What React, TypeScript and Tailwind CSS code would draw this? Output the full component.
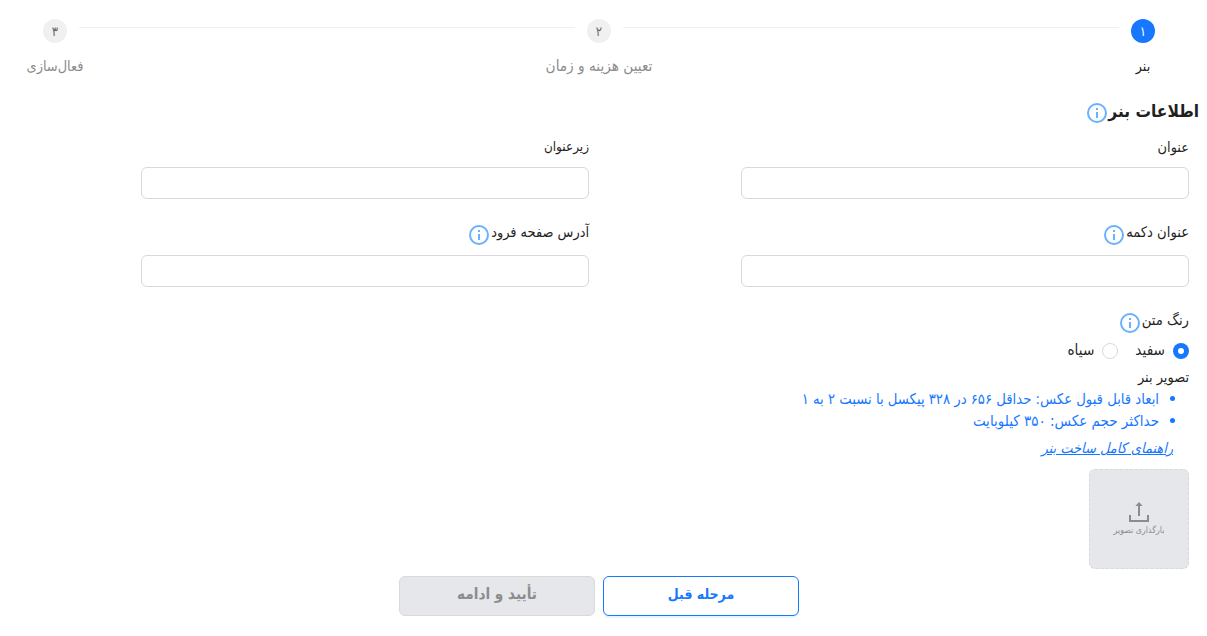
import { useState } from "react";
import clsx from "clsx";

const steps = [
  { number: "۱", title: "بنر", size: "text-[14.2px]" },
  { number: "۲", title: "تعیین هزینه و زمان", size: "text-[15.2px]" },
  { number: "۳", title: "فعال‌سازی", size: "text-[14.4px]" },
];

function InfoIcon() {
  return (
    <svg viewBox="0 0 20 20" className="size-5 shrink-0" fill="none" aria-hidden>
      <circle cx="10" cy="10" r="9" stroke="#69b1ff" strokeWidth="2" />
      <path d="M9 5h2v2H9zM9 9h2v6H9z" fill="#69b1ff" />
    </svg>
  );
}

function Steps({ current }: { current: number }) {
  return (
    <div className="flex h-[60px] items-start justify-between pr-[1px]">
      {steps.map((step, index) => (
        <div key={step.number} className={clsx("flex", index < 2 && "w-[544px]")}>
          <div className="flex w-[110px] flex-col items-center">
            <span
              className={clsx(
                "flex size-6 items-center justify-center rounded-full text-[13px] leading-none",
                index === current ? "bg-[#1677ff] text-white" : "bg-[#f0f0f0] text-[#666]",
              )}
            >
              {step.number}
            </span>
            <span
              className={clsx(
                "mt-[12px] whitespace-nowrap leading-[22px]",
                step.size,
                index === current ? "text-[#1f1f1f]" : "text-[#8c8c8c]",
              )}
            >
              {step.title}
            </span>
          </div>
          {index < 2 && <span className="-mx-[31px] mt-[8px] h-px w-[496px] shrink-0 bg-[#f0f0f0]" />}
        </div>
      ))}
    </div>
  );
}

function Label({ text, info, size = "text-[14.4px]" }: { text: string; info?: boolean; size?: string }) {
  return (
    <div className={clsx("flex h-[22px] items-center whitespace-nowrap leading-[22px]", size)}>
      <span className={clsx(info && "-mt-[4px]")}>{text}</span>
      {info && (
        <span className="mr-[2px] mt-[2px]">
          <InfoIcon />
        </span>
      )}
    </div>
  );
}

function Field({ label, info, size }: { label: string; info?: boolean; size?: string }) {
  return (
    <label className="block w-[448px]">
      <Label text={label} info={info} size={size} />
      <input
        className={clsx(
          "block h-8 w-full rounded-md border border-[#d9d9d9] px-[11px] text-sm outline-none focus:border-[#1677ff]",
          info ? "mt-[10px]" : "mt-[9px]",
        )}
      />
    </label>
  );
}

function Radio({ label, checked, onChange }: { label: string; checked: boolean; onChange: () => void }) {
  return (
    <label className="flex cursor-pointer items-center gap-2">
      <input type="radio" className="sr-only" checked={checked} onChange={onChange} />
      <span
        className={clsx(
          "flex size-4 items-center justify-center rounded-full",
          checked ? "bg-[#1677ff]" : "border border-[#d9d9d9]",
        )}
      >
        {checked && <span className="size-1.5 rounded-full bg-white" />}
      </span>
      <span className="-mt-[2px] min-w-[31px] text-[15.2px] last:min-w-0">{label}</span>
    </label>
  );
}

export default function App() {
  const [color, setColor] = useState("white");

  return (
    <main
      dir="rtl"
      className="h-[636px] w-[1199px] overflow-hidden bg-white pt-[19px] font-['DejaVu_Sans_Condensed','DejaVu_Sans',sans-serif] text-[14.4px] text-[#1f1f1f]"
    >
      <Steps current={0} />

      <h1 className="mt-[18px] flex h-[30px] items-center whitespace-nowrap text-[17.2px] font-bold leading-[30px]">
        <span className="-mt-[2px]">اطلاعات بنر</span>
        <span className="mr-[1px] mt-[2px]">
          <InfoIcon />
        </span>
      </h1>

      <section className="pr-[10px]">
        <div className="mt-[9px] flex gap-[152px]">
          <Field label="عنوان" size="text-[14.4px]" />
          <Field label="زیرعنوان" size="text-[13.4px]" />
        </div>
        <div className="mt-[24px] flex gap-[152px]">
          <Field label="عنوان دکمه" info size="text-[14.6px]" />
          <Field label="آدرس صفحه فرود" info />
        </div>

        <div className="mt-[24px]">
          <Label text="رنگ متن" info size="text-[14.7px]" />
          <div className="mt-[7px] flex h-[22px] items-center gap-[17px]">
            <Radio label="سفید" checked={color === "white"} onChange={() => setColor("white")} />
            <Radio label="سیاه" checked={color === "black"} onChange={() => setColor("black")} />
          </div>
        </div>

        <div className="mt-[4px]">
          <Label text="تصویر بنر" />
          <ul className="whitespace-nowrap pr-[14px] leading-[22px] text-[#1677ff]">
            <li className="flex h-[22px] items-center gap-[11px] text-[14.7px]">
              <span className="-mt-[2px] size-[5px] rounded-full bg-[#1677ff]" />
              <span>ابعاد قابل قبول عکس: حداقل ۶۵۶ در ۳۲۸ پیکسل با نسبت ۲ به ۱</span>
            </li>
            <li className="flex h-[22px] items-center gap-[11px] text-[15px]">
              <span className="-mt-[2px] size-[5px] rounded-full bg-[#1677ff]" />
              <span>حداکثر حجم عکس: ۳۵۰ کیلوبایت</span>
            </li>
          </ul>
          <a href="#" className="mr-[16px] mt-[5px] block w-fit italic leading-[22px] text-[#1677ff] underline">
            راهنمای کامل ساخت بنر
          </a>
        </div>

        <button
          type="button"
          className="mt-[10px] flex size-[100px] flex-col items-center rounded-md border border-dashed border-[#d9d9d9] bg-[#e5e7eb] pt-[31px] text-[#8c8c8c]"
        >
          <svg viewBox="0 0 20 21" className="h-[21px] w-5 shrink-0" fill="#8c8c8c" aria-hidden>
            <path d="M10 1 13.7 5H11V15H9V5H6.3zM0 14h2v5h16v-5h2v7H0z" />
          </svg>
          <span className="mt-px whitespace-nowrap text-[8.8px] leading-[14px]">بارگذاری تصویر</span>
        </button>
      </section>

      <div className="mt-[7px] flex justify-center gap-2 pl-[1px] pr-[2px] font-bold">
        <button
          type="button"
          className="h-10 w-[196px] rounded-md border border-[#1677ff] bg-white pb-[4px] text-[14px] text-[#1677ff] shadow-[0_2px_0_rgba(5,145,255,0.1)]"
        >
          مرحله قبل
        </button>
        <button
          type="button"
          className="h-10 w-[196px] rounded-md border border-[#d9d9d9] bg-[#e5e7eb] pb-[4px] text-[15.2px] text-[#8c8c8c]"
        >
          تأیید و ادامه
        </button>
      </div>
    </main>
  );
}
